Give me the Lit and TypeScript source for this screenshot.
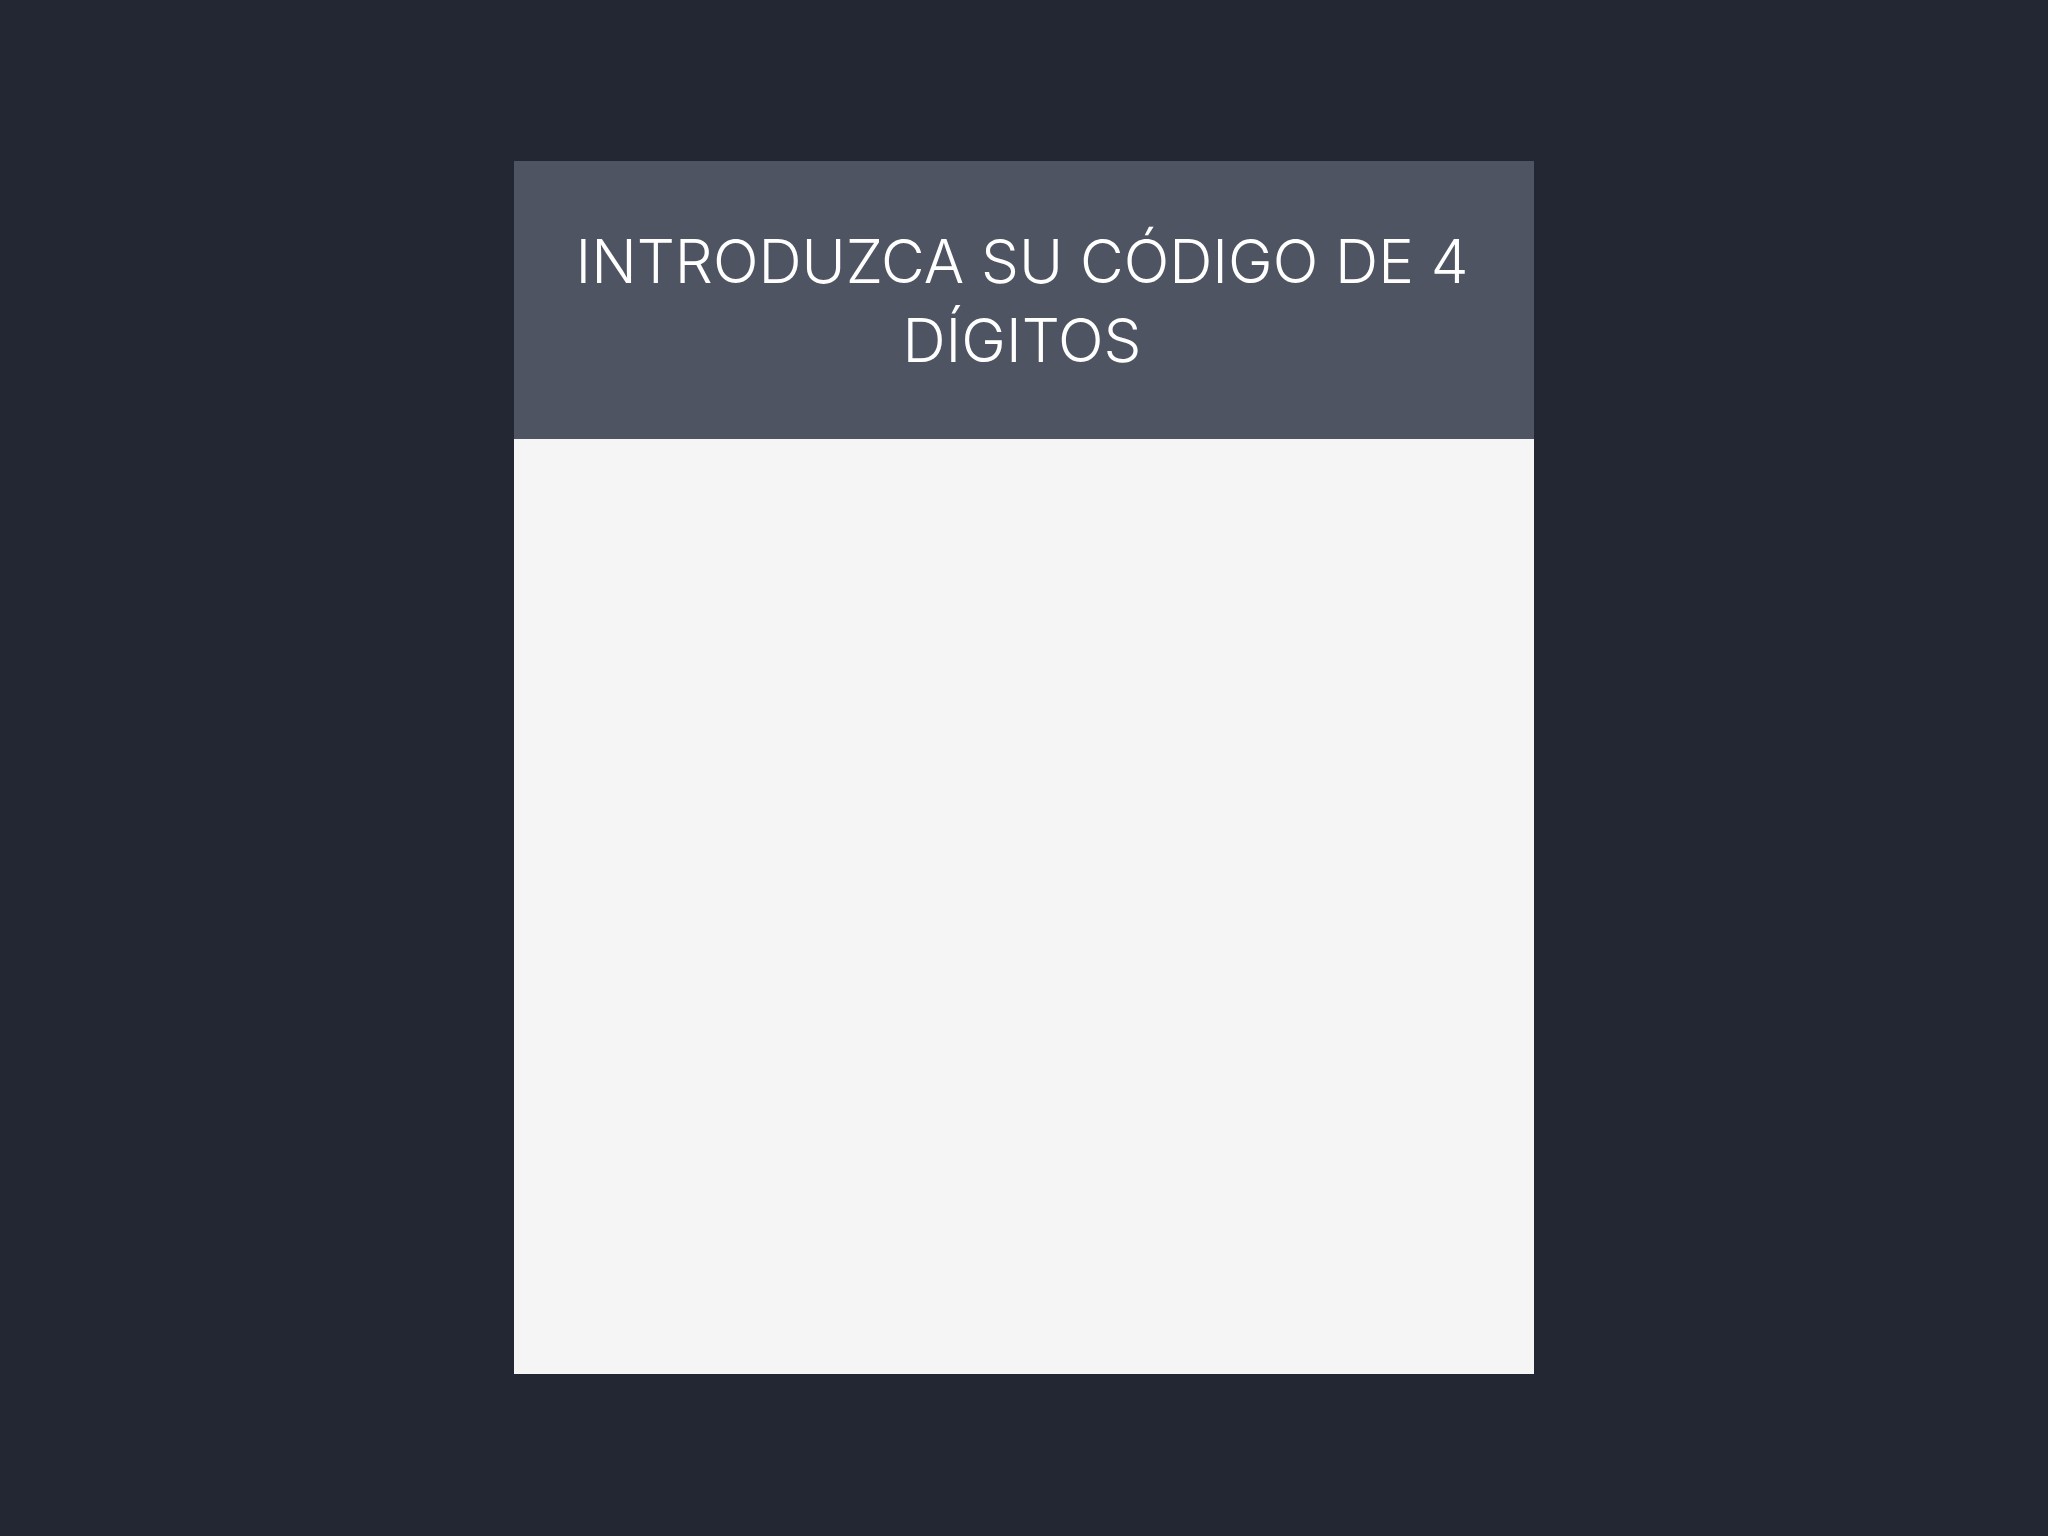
import { LitElement, html, css } from "lit";
import { customElement } from "lit/decorators.js";

@customElement("app-root")
export class AppRoot extends LitElement {
  static styles = css`
    :host {
      display: flex;
      justify-content: center;
      min-height: 100vh;
      box-sizing: border-box;
      padding: 161px 0 162px;
      background: #232733;
      font-family: Inter, "Liberation Sans", sans-serif;
    }
    .dialog {
      display: flex;
      flex-direction: column;
      width: 50%;
      max-width: 1020px;
      background: #f5f5f5;
    }
    .header {
      padding: 61px 58px 59px 54px;
      background: #4f5462;
    }
    .title {
      margin: 0;
      color: #ffffff;
      font-size: 60px;
      font-weight: 300;
      line-height: 79px;
      text-align: center;
      text-transform: uppercase;
    }
    .body {
      flex: 1;
    }
  `;

  render() {
    return html`
      <main class="dialog">
        <header class="header">
          <h1 class="title">Introduzca su código de 4 dígitos</h1>
        </header>
        <section class="body"></section>
      </main>
    `;
  }
}
